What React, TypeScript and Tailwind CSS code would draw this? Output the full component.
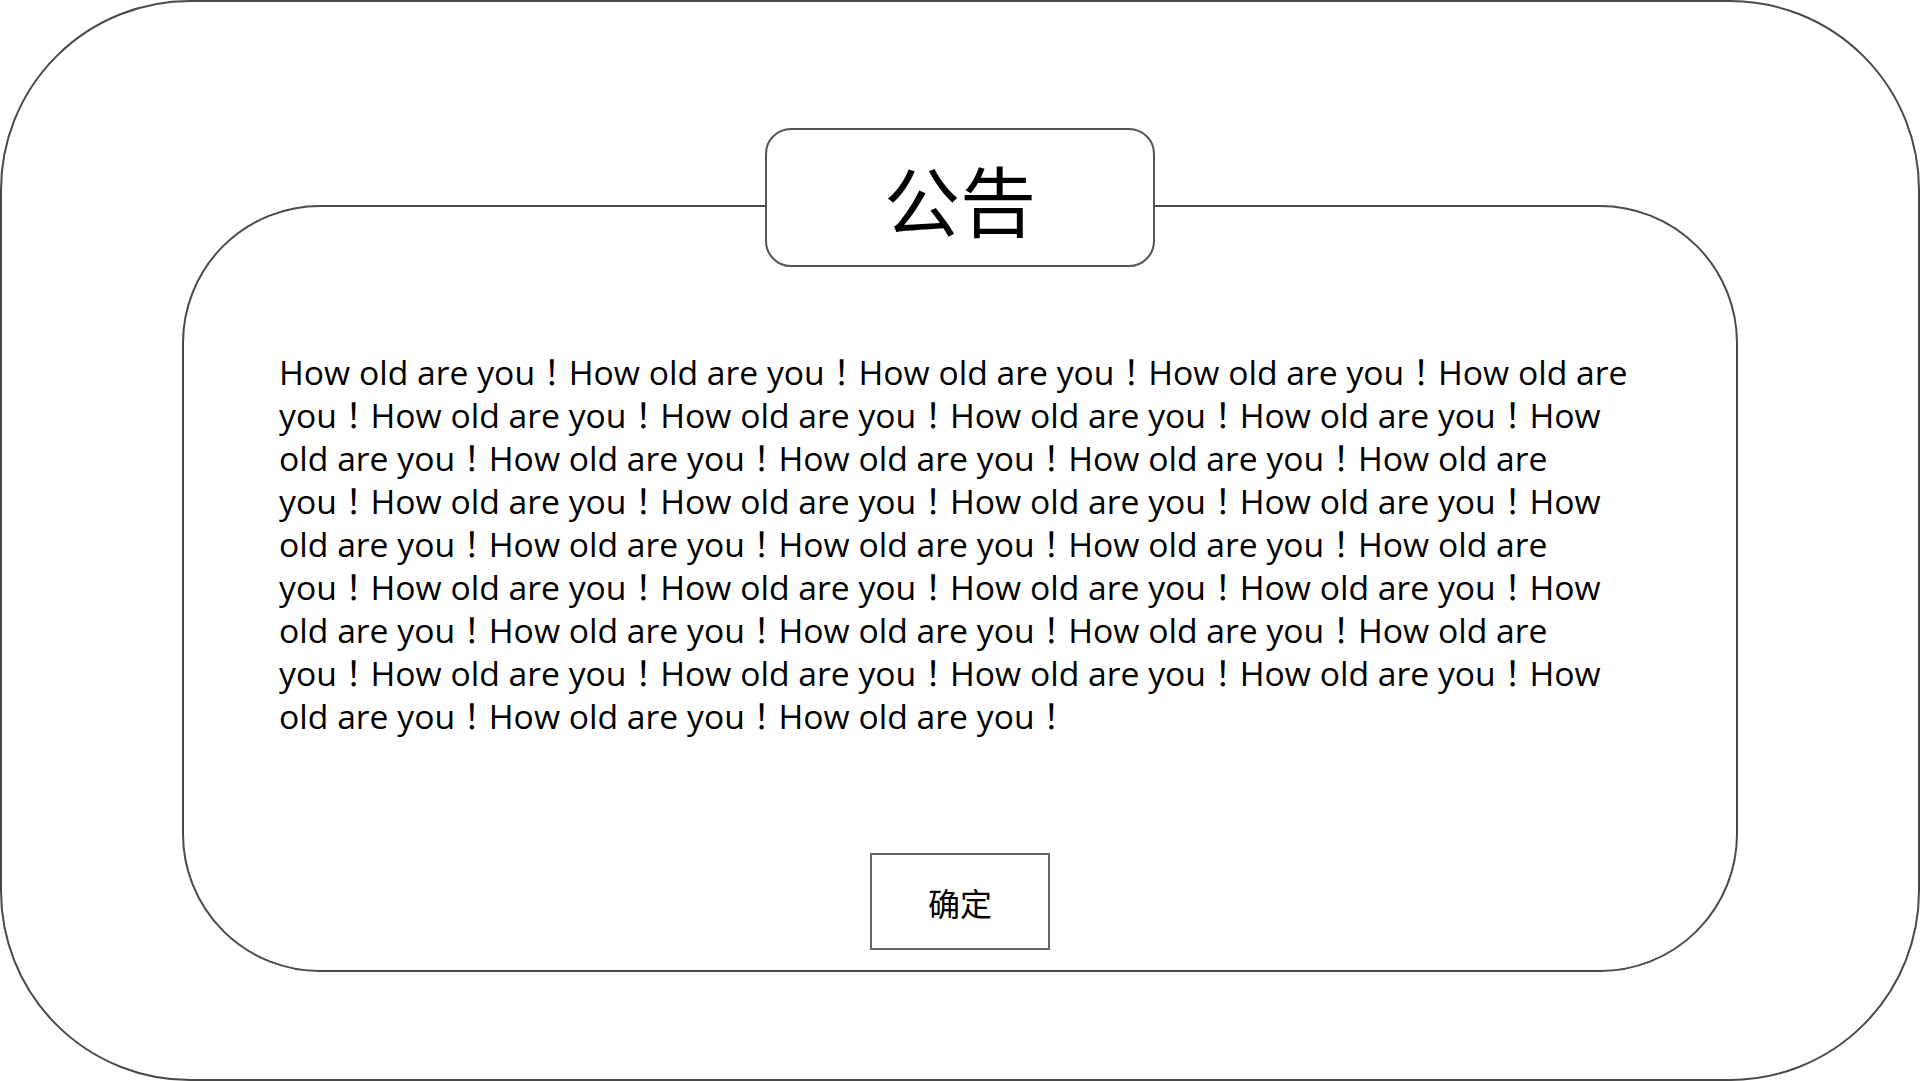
const phrase = 'How old are you！';

export default function App() {
  const text = Array(39).fill(phrase).join('');

  return (
    <div className="w-[1920px] h-[1081px] bg-white">
      <div className="h-full w-full border-2 border-[#4a4a4a] rounded-[190px] flex flex-col items-center pt-[203px]">
        <div className="w-[1556px] h-[767px] border-2 border-[#4a4a4a] rounded-[138px] flex flex-col items-center">
          {/* title sits over the top border */}
          <div className="-mt-[79px] w-[390px] h-[139px] border-2 border-[#555555] rounded-[26px] bg-white flex items-center justify-center text-[76px] text-black font-['Noto_Sans_CJK_SC',sans-serif]">
            公告
          </div>

          <p className="mt-[84px] w-full px-[95px] text-[33.7px] leading-[43px] text-black font-['Open_Sans','Noto_Sans_CJK_TC',sans-serif]">
            {text}
          </p>

          <button className="mt-auto mb-[20px] w-[180px] h-[97px] border-2 border-[#666666] bg-white text-[32px] text-black font-['Noto_Sans_CJK_SC',sans-serif]">
            确定
          </button>
        </div>
      </div>
    </div>
  );
}
